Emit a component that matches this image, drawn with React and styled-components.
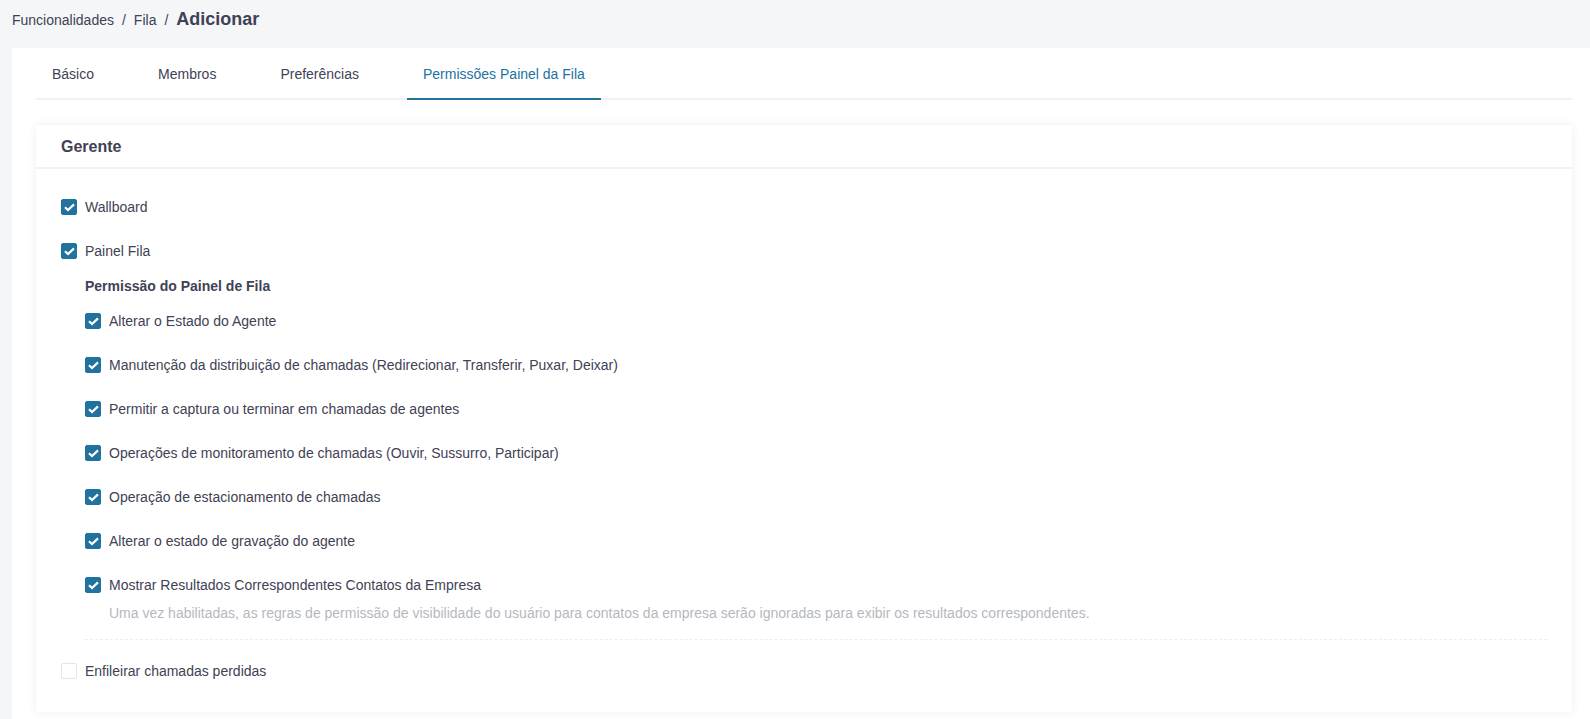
import React from 'react';
import styled, { createGlobalStyle } from 'styled-components';

const GlobalStyle = createGlobalStyle`
  html, body {
    margin: 0;
    padding: 0;
    height: 100%;
    background: #f5f6f8;
    font-family: "Liberation Sans", Arial, sans-serif;
    font-size: 14px;
    color: #3f4254;
    overflow: hidden;
  }
`;

const Page = styled.div`
  height: 719px;
  display: flex;
  flex-direction: column;
  overflow: hidden;
`;

const Breadcrumb = styled.div`
  height: 48px;
  flex: none;
  box-sizing: border-box;
  padding: 8px 0 0 12px;
  display: flex;
  align-items: flex-start;
  line-height: 24px;
  font-size: 14px;
`;

const Sep = styled.span`
  margin: 0 8px;
`;

const Title = styled.span`
  font-size: 18px;
  line-height: 22px;
  font-weight: 700;
`;

const Panel = styled.div`
  flex: 1;
  margin-left: 12px;
  padding: 0 18px 0 24px;
  background: #fff;
`;

const Tabs = styled.div`
  display: flex;
  gap: 32px;
  height: 52px;
  box-sizing: border-box;
  border-bottom: 2px solid #eff1f3;
`;

const Tab = styled.div`
  height: 52px;
  box-sizing: border-box;
  padding: 0 16px;
  line-height: 52px;
  color: ${(props) => (props.$active ? '#22729f' : '#3f4254')};
  border-bottom: 2px solid ${(props) => (props.$active ? '#22729f' : 'transparent')};
`;

const Card = styled.div`
  margin-top: 25px;
  height: 587px;
  background: #fff;
  box-shadow: 0 0 10px rgba(60, 70, 90, 0.09);
  border-radius: 2px;
`;

const CardHeader = styled.div`
  height: 41px;
  padding: 1px 0 0 25px;
  line-height: 41px;
  font-size: 16px;
  font-weight: 700;
  border-bottom: 2px solid #f1f2f4;
`;

const CardBody = styled.div`
  padding: 29px 25px 0;
`;

const Row = styled.label`
  display: flex;
  align-items: center;
  gap: 8px;
  height: 18px;
  margin-top: ${(props) => props.$before ?? 0}px;
  margin-bottom: ${(props) => props.$after ?? 26}px;
  line-height: 18px;
`;

const Box = styled.span`
  width: 16px;
  height: 16px;
  flex: none;
  box-sizing: border-box;
  border-radius: 2px;
  display: flex;
  align-items: center;
  justify-content: center;
  background: ${(props) => (props.$checked ? '#22729f' : '#fff')};
  border: 1px solid ${(props) => (props.$checked ? '#22729f' : '#e3e5e8')};
`;

const Nested = styled.div`
  padding-left: 24px;
`;

const SubTitle = styled.div`
  font-weight: 700;
  line-height: 18px;
  margin-bottom: 17px;
`;

const Hint = styled.div`
  margin: -16px 0 0 24px;
  line-height: 18px;
  color: #b5b8bf;
`;

const Dashed = styled.div`
  margin-top: 17px;
  border-top: 1px dashed #eceef0;
`;

const Check = ({ checked, label, before, after }) => (
  <Row $before={before} $after={after}>
    <Box $checked={checked}>
      {checked && (
        <svg width="11" height="9" viewBox="0 0 11 9" fill="none">
          <path d="M1 4.2 4 7 10 1.4" stroke="#fff" strokeWidth="2.2" />
        </svg>
      )}
    </Box>
    {label}
  </Row>
);

const permissions = [
  'Alterar o Estado do Agente',
  'Manutenção da distribuição de chamadas (Redirecionar, Transferir, Puxar, Deixar)',
  'Permitir a captura ou terminar em chamadas de agentes',
  'Operações de monitoramento de chamadas (Ouvir, Sussurro, Participar)',
  'Operação de estacionamento de chamadas',
  'Alterar o estado de gravação do agente',
  'Mostrar Resultados Correspondentes Contatos da Empresa',
];

const App = () => (
  <Page>
    <GlobalStyle />
    <Breadcrumb>
      Funcionalidades<Sep>/</Sep>Fila<Sep>/</Sep>
      <Title>Adicionar</Title>
    </Breadcrumb>
    <Panel>
      <Tabs>
        <Tab>Básico</Tab>
        <Tab>Membros</Tab>
        <Tab>Preferências</Tab>
        <Tab $active>Permissões Painel da Fila</Tab>
      </Tabs>
      <Card>
        <CardHeader>Gerente</CardHeader>
        <CardBody>
          <Check checked label="Wallboard" />
          <Check checked label="Painel Fila" after={17} />
          <Nested>
            <SubTitle>Permissão do Painel de Fila</SubTitle>
            {permissions.map((text) => (
              <Check checked label={text} key={text} />
            ))}
            <Hint>
              Uma vez habilitadas, as regras de permissão de visibilidade do usuário para contatos
              da empresa serão ignoradas para exibir os resultados correspondentes.
            </Hint>
            <Dashed />
          </Nested>
          <Check label="Enfileirar chamadas perdidas" before={22} />
        </CardBody>
      </Card>
    </Panel>
  </Page>
);

export default App;
